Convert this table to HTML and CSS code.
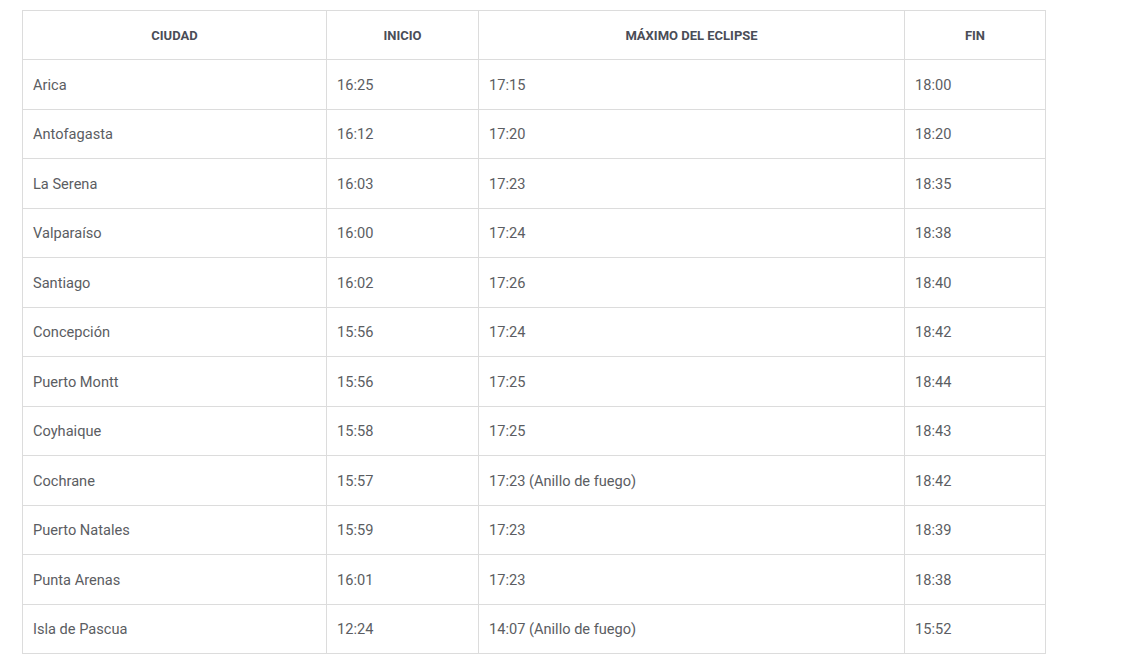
FILE: index.html
```html
<!DOCTYPE html>
<html lang="es">
<head>
<meta charset="utf-8">
<title>Eclipse</title>
<link rel="stylesheet" href="styles.css">
</head>
<body>
<div class="wrap">
<table class="eclipse">
<colgroup>
<col class="c-city"><col class="c-start"><col class="c-max"><col class="c-end">
</colgroup>
<thead>
<tr><th>Ciudad</th><th>Inicio</th><th>Máximo del eclipse</th><th>Fin</th></tr>
</thead>
<tbody>
<tr><td>Arica</td><td>16:25</td><td>17:15</td><td>18:00</td></tr>
<tr><td>Antofagasta</td><td>16:12</td><td>17:20</td><td>18:20</td></tr>
<tr><td>La Serena</td><td>16:03</td><td>17:23</td><td>18:35</td></tr>
<tr><td>Valparaíso</td><td>16:00</td><td>17:24</td><td>18:38</td></tr>
<tr><td>Santiago</td><td>16:02</td><td>17:26</td><td>18:40</td></tr>
<tr><td>Concepción</td><td>15:56</td><td>17:24</td><td>18:42</td></tr>
<tr><td>Puerto Montt</td><td>15:56</td><td>17:25</td><td>18:44</td></tr>
<tr><td>Coyhaique</td><td>15:58</td><td>17:25</td><td>18:43</td></tr>
<tr><td>Cochrane</td><td>15:57</td><td>17:23 (Anillo de fuego)</td><td>18:42</td></tr>
<tr><td>Puerto Natales</td><td>15:59</td><td>17:23</td><td>18:39</td></tr>
<tr><td>Punta Arenas</td><td>16:01</td><td>17:23</td><td>18:38</td></tr>
<tr><td>Isla de Pascua</td><td>12:24</td><td>14:07 (Anillo de fuego)</td><td>15:52</td></tr>
</tbody>
</table>
</div>
</body>
</html>
```
FILE: styles.css
```css
html, body {
  margin: 0;
  padding: 0;
  background: #fff;
}
.wrap {
  padding: 10px 0 0 22px;
}
.eclipse {
  border-collapse: collapse;
  table-layout: fixed;
  width: 1023px;
  font-family: Roboto, "Noto Sans", sans-serif;
  font-size: 14.6px;
  line-height: 17px;
  color: #5b5d62;
}
.c-city { width: 304px; }
.c-start { width: 152px; }
.c-max { width: 426px; }
.c-end { width: 141px; }
.eclipse th,
.eclipse td {
  border: 1px solid #dcdcdc;
  padding: 0 10px;
  text-align: left;
  vertical-align: middle;
}
.eclipse th {
  height: 48px;
  text-align: center;
  text-transform: uppercase;
  font-weight: 700;
  font-size: 13px;
  color: #4a4d57;
}
.eclipse td {
  height: 46.5px;
  padding-top: 2px;
}
```
